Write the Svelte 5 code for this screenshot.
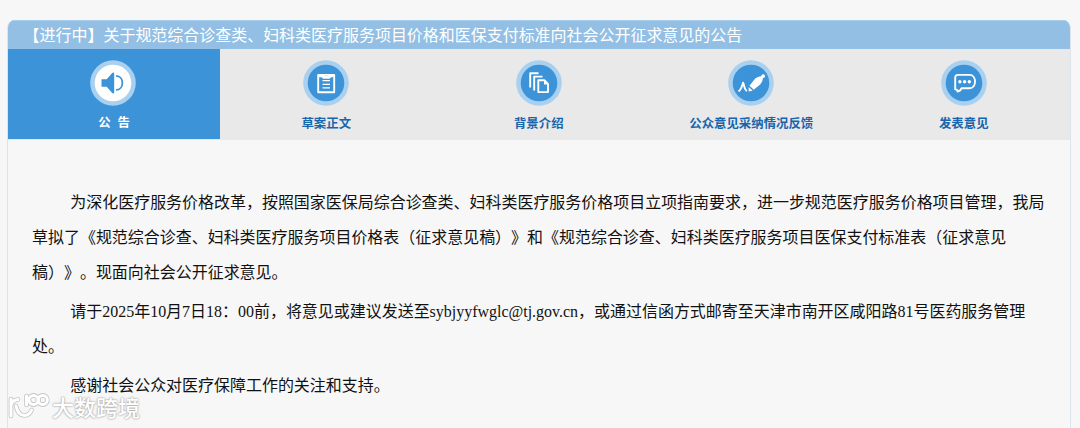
<script>
  const tabs = [
    { label: '公 告', icon: 'speaker', active: true },
    { label: '草案正文', icon: 'document' },
    { label: '背景介绍', icon: 'pages' },
    { label: '公众意见采纳情况反馈', icon: 'pen' },
    { label: '发表意见', icon: 'chat' }
  ];
  const paragraphs = [
    [
      '为深化医疗服务价格改革，按照国家医保局综合诊查类、妇科类医疗服务价格项目立项指南要求，进一步规范医疗服务价格项目管理，我局',
      '草拟了《规范综合诊查、妇科类医疗服务项目价格表（征求意见稿）》和《规范综合诊查、妇科类医疗服务项目医保支付标准表（征求意见',
      '稿）》。现面向社会公开征求意见。'
    ],
    [
      '请于2025年10月7日18：00前，将意见或建议发送至sybjyyfwglc@tj.gov.cn，或通过信函方式邮寄至天津市南开区咸阳路81号医药服务管理',
      '处。'
    ],
    ['感谢社会公众对医疗保障工作的关注和支持。']
  ];
</script>

<main class="panel">
  <h1>【进行中】关于规范综合诊查类、妇科类医疗服务项目价格和医保支付标准向社会公开征求意见的公告</h1>
  <nav>
    {#each tabs as tab}
      <a class="tab" class:active={tab.active}>
        <svg class="icon" viewBox="0 0 46 46">
          <circle class="ring" cx="23" cy="23" r="22.8" />
          <circle class="disc" cx="23" cy="23" r="18.3" />
          {#if tab.icon === 'speaker'}
            <path class="blue" d="M11.5 19.3h5.2l5.5-6.4q2-1.3 2 .8v18.6q0 2-2 .8l-5.5-6.4h-5.2z" />
            <path class="bluestroke" d="M26 15.9c8.5 0 8.5 14 0 14" />
          {:else if tab.icon === 'document'}
            <path class="line" d="M15.2 14.9h16v17.3h-16z" />
            <path class="white" d="M16 14h4.4l1.6 2h2.6l1.6-2h4.2v3.2h-2.2l-1.6 1.5h-6.4l-1.6-1.5H16z" />
            <path class="thin" d="M19.5 20.7h7.5M19.5 24.3h7.5M19.5 27.8h7.5" />
          {:else if tab.icon === 'pages'}
            <path class="line" d="M14.2 27.5V13.2h8.3M18.2 30.5V16.6h8.3M22.3 20.3h6.3l3.4 3.5v8.3h-9.7z" />
            <path class="white" d="M28 20.3v4.2h4.2z" />
          {:else if tab.icon === 'pen'}
            <path class="line" d="M10.5 31.4c2.8-1.8 3.3-4.5 4.6-8.8 1.5 3.6 1 7 3.8 8.2" />
            <path class="white" d="M21.5 25.8l5.7-7.2c1.8-1.5 4.6-2.7 6.6-2.4l1 1c.4 2.8-1.1 5.6-2.7 7.2l-6.3 5.3z" />
            <path class="white" d="M20.7 26.9l4 3.8-4.1.8z" />
            <circle class="white" cx="35.2" cy="16.1" r="1.9" />
          {:else}
            <path class="line" d="M14.2 17.7q0-2.8 2.8-2.8h11.5c7.4 0 7.4 13.4 0 13.4h-8c-.6 1.7-2 3-4 3.3.3-1.4-.2-2-2.3-2.3z" />
            <circle class="white" cx="18.9" cy="21.7" r="1.7" />
            <circle class="white" cx="23.6" cy="21.7" r="1.7" />
            <circle class="white" cx="28.3" cy="21.7" r="1.7" />
          {/if}
        </svg>
        <span>{tab.label}</span>
      </a>
    {/each}
  </nav>
  <article>
    {#each paragraphs as lines}
      <p>
        {#each lines as line}<span class="row">{line}</span>{/each}
      </p>
    {/each}
  </article>
  <div class="watermark">
    <svg viewBox="0 0 42 30">
      {#each ['shade', 'mark'] as layer}
        <g class={layer}>
          <path d="M3 7v17M3 13.5q1-5.5 7-6M8 14q2 9.5 8.5 9.5 5 0 7-5.5M18.5 4v9" />
          <circle cx="25.5" cy="8" r="4.6" />
          <circle cx="34.8" cy="8" r="4.6" />
        </g>
      {/each}
    </svg>
    <span>大数跨境</span>
  </div>
</main>

<style>
  :global(body) {
    background: #f7f7f7;
    overflow: hidden;
  }
  .panel {
    position: relative;
    box-sizing: border-box;
    width: 1064px;
    height: 408px;
    margin: 20px 0 0 7px;
    border: solid #dce4ec;
    border-width: 0 1px;
    border-radius: 8px 8px 0 0;
    overflow: hidden;
    text-spacing-trim: space-all;
    font-family: 'Noto Sans CJK SC', sans-serif;
  }
  h1 {
    box-sizing: border-box;
    height: 29px;
    margin: 0;
    padding-left: 15.6px;
    border-top: 1px solid #a9cfee;
    background: #93bfe4;
    color: #fff;
    font-size: 15.97px;
    font-weight: 400;
    line-height: 27px;
    white-space: nowrap;
  }
  nav {
    display: grid;
    grid-template-columns: 212px repeat(4, 212.5px);
    height: 90.5px;
    background: #e9e9e9;
  }
  .tab {
    display: flex;
    flex-direction: column;
    align-items: center;
    box-sizing: border-box;
    padding-top: 11px;
    color: #1765ad;
    font-size: 12.4px;
    font-weight: 700;
    line-height: 18px;
    white-space: pre;
  }
  .tab span {
    margin-top: 7.5px;
  }
  .tab.active {
    height: 90px;
    background: #3d93d8;
    color: #fff;
    word-spacing: 4px;
  }
  .tab.active span {
    margin-top: 6.5px;
  }
  .icon {
    width: 46px;
    height: 46px;
    flex: none;
  }
  .active .icon {
    margin-right: 2px;
  }
  .ring { fill: #a9d0ef; }
  .disc { fill: #3d93d8; }
  .active .disc { fill: #fff; }
  .blue { fill: #3d93d8; }
  .white { fill: #fff; }
  .bluestroke { fill: none; stroke: #3d93d8; stroke-width: 1.8; }
  .line { fill: none; stroke: #fff; stroke-width: 1.9; stroke-linejoin: round; }
  .thin { stroke: #fff; stroke-width: 1.2; }
  article {
    padding: 45.5px 0 0 24px;
    color: #111;
    font-family: 'Liberation Serif', 'Noto Sans CJK SC', serif;
    font-size: 15.97px;
    line-height: 35px;
  }
  p {
    margin: 0 0 4px;
    text-indent: 38.3px;
  }
  .row {
    display: block;
    height: 35px;
    white-space: nowrap;
  }
  .row + .row {
    text-indent: 0;
  }
  .watermark {
    position: absolute;
    left: 0;
    top: 372px;
    display: flex;
    align-items: center;
    color: #fff;
    font-size: 22px;
    font-weight: 500;
    line-height: 32px;
    text-shadow: 0 0 2px #999, 0 0 2px #bbb;
  }
  .watermark svg {
    width: 42px;
    height: 30px;
    margin-right: 2px;
  }
  .watermark span {
    margin-top: -2px;
  }
  .watermark g {
    fill: none;
    stroke-linecap: round;
  }
  .shade { stroke: #c4c4c4; stroke-width: 4.6; }
  .mark { stroke: #fff; stroke-width: 3; }
</style>
